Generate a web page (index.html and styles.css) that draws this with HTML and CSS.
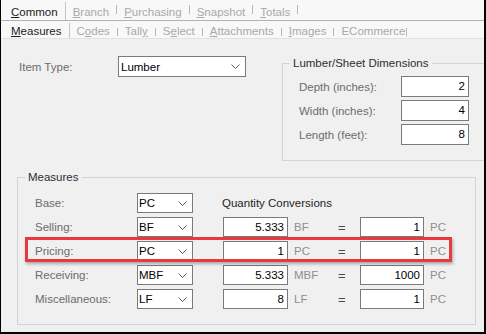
FILE: index.html
```html
<!DOCTYPE html>
<html>
<head>
    <meta charset="utf-8" />
    <title>Item - Measures</title>
    <link rel="stylesheet" href="styles.css">
</head>
<body>
    <div class="window">
        <div class="tabs tabs-top">
            <span class="tab tab-on"><u>C</u>ommon</span><span class="sep sep-on"></span>
            <span class="tab"><u>B</u>ranch</span><span class="sep"></span>
            <span class="tab"><u>P</u>urchasing</span><span class="sep"></span>
            <span class="tab"><u>S</u>napshot</span><span class="sep"></span>
            <span class="tab"><u>T</u>otals</span><span class="sep"></span>
        </div>
        <div class="tabs tabs-sub">
            <span class="tab tab-on"><u>M</u>easures</span><span class="sep sep-on"></span>
            <span class="tab">C<u>o</u>des</span><span class="sep"></span>
            <span class="tab">Tall<u>y</u></span><span class="sep"></span>
            <span class="tab">S<u>e</u>lect</span><span class="sep"></span>
            <span class="tab"><u>A</u>ttachments</span><span class="sep"></span>
            <span class="tab"><u>I</u>mages</span><span class="sep"></span>
            <span class="tab tab-last">ECommerce</span><span class="sep"></span>
        </div>
        <div class="page">
            <div class="top">
                <div class="item-type">
                    <span class="lbl">Item Type:</span>
                    <div class="combo combo-wide">
                        <span>Lumber</span>
                        <svg width="9" height="5" viewBox="0 0 9 5"><polyline points="0.5,0.5 4.5,4.5 8.5,0.5" fill="none" stroke="#5c5c5c" /></svg>
                    </div>
                </div>
                <fieldset class="group dims">
                    <legend>Lumber/Sheet Dimensions</legend>
                    <div class="dim-list">
                        <div class="dim-row"><span class="dim-lbl">Depth (inches):</span><span class="box">2</span></div>
                        <div class="dim-row"><span class="dim-lbl">Width (inches):</span><span class="box">4</span></div>
                        <div class="dim-row"><span class="dim-lbl">Length (feet):</span><span class="box">8</span></div>
                    </div>
                </fieldset>
            </div>
            <fieldset class="group measures">
                <legend>Measures</legend>
                <div class="m-list">
                    <div class="m-row">
                        <span class="m-lbl">Base:</span>
                        <div class="combo combo-unit"><span>PC</span><svg width="9" height="5" viewBox="0 0 9 5"><polyline points="0.5,0.5 4.5,4.5 8.5,0.5" fill="none" stroke="#5c5c5c" /></svg></div>
                        <span class="qc-title">Quantity Conversions</span>
                    </div>
                    <div class="m-row">
                        <span class="m-lbl">Selling:</span>
                        <div class="combo combo-unit"><span>BF</span><svg width="9" height="5" viewBox="0 0 9 5"><polyline points="0.5,0.5 4.5,4.5 8.5,0.5" fill="none" stroke="#5c5c5c" /></svg></div>
                        <span class="box box-qty">5.333</span><span class="unit unit-qty">BF</span>
                        <span class="eq">=</span>
                        <span class="box box-base">1</span><span class="unit">PC</span>
                    </div>
                    <div class="m-row m-row-marked">
                        <span class="m-lbl">Pricing:</span>
                        <div class="combo combo-unit"><span>PC</span><svg width="9" height="5" viewBox="0 0 9 5"><polyline points="0.5,0.5 4.5,4.5 8.5,0.5" fill="none" stroke="#5c5c5c" /></svg></div>
                        <span class="box box-qty">1</span><span class="unit unit-qty">PC</span>
                        <span class="eq">=</span>
                        <span class="box box-base">1</span><span class="unit">PC</span>
                        <div class="callout"></div>
                    </div>
                    <div class="m-row">
                        <span class="m-lbl">Receiving:</span>
                        <div class="combo combo-unit"><span>MBF</span><svg width="9" height="5" viewBox="0 0 9 5"><polyline points="0.5,0.5 4.5,4.5 8.5,0.5" fill="none" stroke="#5c5c5c" /></svg></div>
                        <span class="box box-qty">5.333</span><span class="unit unit-qty">MBF</span>
                        <span class="eq">=</span>
                        <span class="box box-base">1000</span><span class="unit">PC</span>
                    </div>
                    <div class="m-row">
                        <span class="m-lbl">Miscellaneous:</span>
                        <div class="combo combo-unit"><span>LF</span><svg width="9" height="5" viewBox="0 0 9 5"><polyline points="0.5,0.5 4.5,4.5 8.5,0.5" fill="none" stroke="#5c5c5c" /></svg></div>
                        <span class="box box-qty">8</span><span class="unit unit-qty">LF</span>
                        <span class="eq">=</span>
                        <span class="box box-base">1</span><span class="unit">PC</span>
                    </div>
                </div>
            </fieldset>
        </div>
    </div>
</body>
</html>
```

FILE: styles.css
```css
body {
    margin: 0;
    background-color: #000;
    font-family: "Liberation Sans", Arial, sans-serif;
    font-size: 11.5px;
}

.window {
    width: 486px;
    height: 334px;
    box-sizing: border-box;
    border-left: 1px solid #000;
    border-right: 2px solid #000;
    border-bottom: 2px solid #000;
    background-color: #f0f0f0;
    overflow: hidden;
}

/* tab strips */
.tabs {
    display: flex;
    align-items: flex-start;
    background-color: #f8f8f8;
    padding-left: 3px;
}

.tabs-top {
    height: 20px;
    border-bottom: 1px solid #b2b2b2;
}

.tabs-sub {
    height: 17px;
    border-bottom: 1px solid #e2e2e2;
}

.tab {
    color: #a9a9a9;
    line-height: 15px;
    padding: 0 7px;
}

.tabs-top .tab {
    padding-top: 5px;
}

.tabs-sub .tab {
    padding-top: 3px;
}

.tab-on {
    color: #1c1c1c;
}

.tab-last {
    padding-right: 1px;
}

.sep {
    width: 1px;
    background-color: #b8b8b8;
}

.tabs-top .sep {
    height: 9px;
    margin-top: 5px;
}

.tabs-sub .sep {
    height: 8px;
    margin-top: 7px;
}

.tabs .sep-on {
    background-color: #c4c4c4;
}

.tabs-top .sep-on {
    height: 18px;
    margin-top: 2px;
}

.tabs-sub .sep-on {
    height: 15px;
    margin-top: 2px;
}

/* shared controls */
.combo {
    display: flex;
    align-items: center;
    justify-content: space-between;
    box-sizing: border-box;
    height: 20px;
    background-color: #fff;
    border: 1px solid #7a7a7a;
    color: #000;
    padding: 0 5px 0 2px;
}

.combo svg {
    display: block;
}

.box {
    display: block;
    box-sizing: border-box;
    height: 20px;
    line-height: 18px;
    background-color: #fff;
    border: 1px solid #7a7a7a;
    color: #000;
    text-align: right;
    padding-right: 3px;
}

.group {
    margin: 0;
    padding: 0;
    border: 1px solid #d3d3d3;
    min-width: 0;
}

.group legend {
    color: #2e2e2e;
    line-height: 14px;
    padding: 0 3px;
}

/* upper area */
.top {
    display: flex;
    align-items: flex-start;
    padding: 17px 0 0 18px;
}

.item-type {
    display: flex;
    align-items: center;
    width: 263px;
}

.lbl {
    width: 99px;
    color: #6c6c6c;
}

.combo-wide {
    width: 128px;
    height: 21px;
}

.dims {
    flex: 1;
    border-right: none;
}

.dims legend {
    margin-left: 7px;
}

.dim-list {
    padding: 6px 0 15px 16px;
}

.dim-row {
    display: flex;
    align-items: center;
    margin-bottom: 3px;
}

.dim-row:last-child {
    margin-bottom: 0;
}

.dim-lbl {
    width: 102px;
    color: #6c6c6c;
}

.dim-row .box {
    width: 68px;
    height: 21px;
    line-height: 19px;
}

/* measures */
.measures {
    margin: 9px 8px 0 16px;
}

.measures legend {
    margin-left: 7px;
}

.m-list {
    padding: 9px 0 15px 17px;
}

.m-row {
    display: flex;
    align-items: center;
    height: 20px;
    margin-bottom: 4px;
}

.m-row:last-child {
    margin-bottom: 0;
}

.m-row-marked {
    position: relative;
}

.m-lbl {
    width: 102px;
    color: #6c6c6c;
}

.combo-unit {
    width: 56px;
    padding-left: 1px;
}

.qc-title {
    margin-left: 29px;
    color: #1e1e1e;
}

.box-qty {
    width: 65px;
    margin-left: 30px;
}

.unit {
    color: #8e8e8e;
    padding-left: 6px;
}

.unit-qty {
    width: 44px;
}

.eq {
    width: 22px;
    color: #4a4a4a;
    font-size: 13px;
}

.box-base {
    width: 64px;
}

.callout {
    position: absolute;
    left: -10px;
    top: -4px;
    width: 427px;
    height: 25px;
    box-sizing: border-box;
    border: 3px solid #e8393f;
    box-shadow: 1px 2px 3px rgba(0, 0, 0, 0.3);
}
```
